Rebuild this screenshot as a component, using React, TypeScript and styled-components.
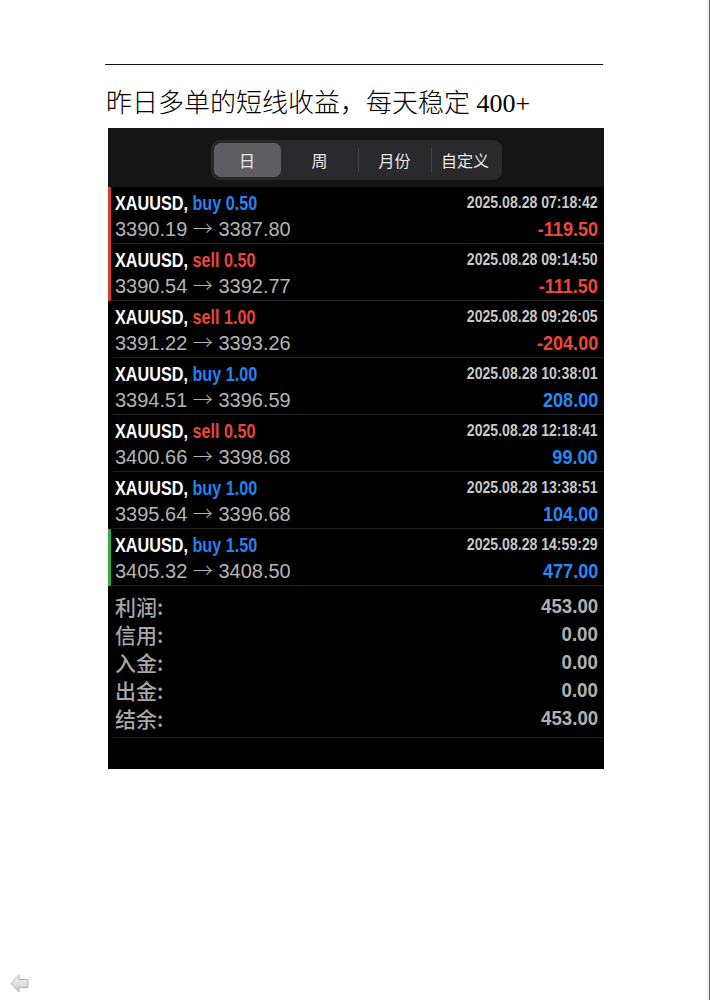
import styled, { createGlobalStyle } from "styled-components";

const GlobalStyle = createGlobalStyle`
  html, body {
    margin: 0;
    padding: 0;
    background: #ffffff;
  }
`;

const Page = styled.div`
  width: 710px;
  height: 1000px;
  box-sizing: border-box;
  display: flex;
  flex-direction: column;
  box-shadow: inset -1px 0 #5a5a5a, inset -3px 0 #efefef;
  overflow: hidden;
`;

const Content = styled.div`
  padding-left: 105px;
  width: 499px;
`;

const Rule = styled.div`
  margin-top: 64px;
  height: 1px;
  width: 498px;
  background: #111;
`;

const Title = styled.h1`
  margin: 21px 0 0 1px;
  font-family: "Liberation Serif", "Noto Sans CJK SC", serif;
  font-weight: 300;
  font-size: 26px;
  line-height: 36px;
  color: #000;
`;

const Panel = styled.div`
  margin: 6px 0 0 3px;
  width: 496px;
  background: #000;
  padding-bottom: 31px;
`;

const Header = styled.div`
  height: 59px;
  background: #151515;
  display: flex;
  justify-content: center;
  align-items: flex-start;
  padding-top: 12px;
  box-sizing: border-box;
`;

const Segmented = styled.div`
  width: 291px;
  height: 40px;
  box-sizing: border-box;
  padding: 3px;
  border-radius: 9px;
  background: #2a2a2c;
  display: grid;
  grid-template-columns: 67px 1px 76px 1px 72px 1px 1fr;
`;

const Segment = styled.div<{ $active?: boolean }>`
  display: flex;
  align-items: center;
  justify-content: center;
  border-radius: 7px;
  background: ${(p) => (p.$active ? "#5e5e62" : "transparent")};
  color: #e8e8e8;
  font-family: "Noto Sans CJK SC", sans-serif;
  font-size: 16px;
`;

const SegDivider = styled.div<{ $hidden?: boolean }>`
  margin: 5px 0;
  background: ${(p) => (p.$hidden ? "transparent" : "#444446")};
`;

const Row = styled.div<{ $accent?: string }>`
  border-left: 3px solid ${(p) => p.$accent || "transparent"};
  padding-left: 2px;
`;

const RowInner = styled.div`
  padding: 3px 6px 0 2px;
  height: 53px;
  border-bottom: 1px solid #242424;
  display: grid;
  grid-template-rows: 26px 26px;
`;

const Line = styled.div`
  display: flex;
  justify-content: space-between;
  align-items: center;
  line-height: 24px;
`;

const Symbol = styled.span`
  display: inline-block;
  font-family: "Liberation Sans", sans-serif;
  font-weight: bold;
  font-size: 20px;
  color: #ffffff;
  white-space: nowrap;
  transform: scaleX(0.81);
  transform-origin: left center;
`;

const Side = styled.span<{ $sell?: boolean }>`
  color: ${(p) => (p.$sell ? "#e8463c" : "#2482f2")};
`;

const Time = styled.span`
  display: inline-block;
  font-family: "Liberation Sans", sans-serif;
  font-weight: bold;
  font-size: 16px;
  color: #c8c8c8;
  transform: scaleX(0.88);
  transform-origin: right center;
`;

const Prices = styled.span`
  font-family: "Liberation Sans", sans-serif;
  font-size: 20px;
  color: #b4b4b4;
  white-space: pre;
`;

const Arrow = styled.span`
  font-family: "Noto Sans CJK SC", sans-serif;
  font-weight: 300;
  line-height: 0;
`;

const Profit = styled.span<{ $loss?: boolean }>`
  display: inline-block;
  font-family: "Liberation Sans", sans-serif;
  font-weight: bold;
  font-size: 21px;
  color: ${(p) => (p.$loss ? "#ee463a" : "#2a88f4")};
  transform: scaleX(0.86);
  transform-origin: right center;
`;

const Summary = styled.div`
  margin-left: 5px;
  padding: 6px 6px 5px 2px;
  border-bottom: 1px solid #1e1e1e;
`;

const SummaryRow = styled.div`
  height: 28px;
  display: flex;
  justify-content: space-between;
  align-items: center;
`;

const SummaryLabel = styled.span`
  font-family: "Noto Sans CJK SC", sans-serif;
  font-weight: 500;
  font-size: 21px;
  color: #a6a6a6;
`;

const SummaryValue = styled.span`
  display: inline-block;
  font-family: "Liberation Sans", sans-serif;
  font-weight: bold;
  font-size: 21px;
  color: #b0b0b0;
  transform: scaleX(0.89);
  transform-origin: right center;
`;

const Footer = styled.div`
  margin-top: auto;
  padding: 0 0 7px 10px;
  height: 19px;
`;

type Trade = {
  side: "buy" | "sell";
  lots: string;
  time: string;
  open: string;
  close: string;
  profit: string;
  accent?: string;
};

const trades: Trade[] = [
  { side: "buy", lots: "0.50", time: "2025.08.28 07:18:42", open: "3390.19", close: "3387.80", profit: "-119.50", accent: "#d9392f" },
  { side: "sell", lots: "0.50", time: "2025.08.28 09:14:50", open: "3390.54", close: "3392.77", profit: "-111.50", accent: "#d9392f" },
  { side: "sell", lots: "1.00", time: "2025.08.28 09:26:05", open: "3391.22", close: "3393.26", profit: "-204.00" },
  { side: "buy", lots: "1.00", time: "2025.08.28 10:38:01", open: "3394.51", close: "3396.59", profit: "208.00" },
  { side: "sell", lots: "0.50", time: "2025.08.28 12:18:41", open: "3400.66", close: "3398.68", profit: "99.00" },
  { side: "buy", lots: "1.00", time: "2025.08.28 13:38:51", open: "3395.64", close: "3396.68", profit: "104.00" },
  { side: "buy", lots: "1.50", time: "2025.08.28 14:59:29", open: "3405.32", close: "3408.50", profit: "477.00", accent: "#2fae3f" },
];

const totals = [
  ["利润:", "453.00"],
  ["信用:", "0.00"],
  ["入金:", "0.00"],
  ["出金:", "0.00"],
  ["结余:", "453.00"],
];

function BackArrow() {
  return (
    <svg width="19" height="19" viewBox="0 0 19 19">
      <defs>
        <linearGradient id="arr" x1="0" y1="0" x2="0" y2="1">
          <stop offset="0" stopColor="#f6f6f6" />
          <stop offset="1" stopColor="#c8c8c8" />
        </linearGradient>
      </defs>
      <path
        d="M1 9.5 L9 1 L9 5.5 L18 5.5 L18 13.5 L9 13.5 L9 18 Z"
        fill="url(#arr)"
        stroke="#b8b8b8"
        strokeWidth="1"
        strokeLinejoin="round"
      />
    </svg>
  );
}

export default function App() {
  return (
    <Page>
      <GlobalStyle />
      <Content>
        <Rule />
        <Title>昨日多单的短线收益，每天稳定 400+</Title>
        <Panel>
          <Header>
            <Segmented>
              <Segment $active>日</Segment>
              <SegDivider $hidden />
              <Segment>周</Segment>
              <SegDivider />
              <Segment>月份</Segment>
              <SegDivider />
              <Segment>自定义</Segment>
            </Segmented>
          </Header>
          {trades.map((t) => (
            <Row key={t.time} $accent={t.accent}>
              <RowInner>
                <Line>
                  <Symbol>
                    XAUUSD,{" "}
                    <Side $sell={t.side === "sell"}>
                      {t.side} {t.lots}
                    </Side>
                  </Symbol>
                  <Time>{t.time}</Time>
                </Line>
                <Line>
                  <Prices>
                    {t.open + " "}
                    <Arrow>→</Arrow>
                    {" " + t.close}
                  </Prices>
                  <Profit $loss={t.profit.startsWith("-")}>{t.profit}</Profit>
                </Line>
              </RowInner>
            </Row>
          ))}
          <Summary>
            {totals.map(([label, value]) => (
              <SummaryRow key={label}>
                <SummaryLabel>{label}</SummaryLabel>
                <SummaryValue>{value}</SummaryValue>
              </SummaryRow>
            ))}
          </Summary>
        </Panel>
      </Content>
      <Footer>
        <BackArrow />
      </Footer>
    </Page>
  );
}
